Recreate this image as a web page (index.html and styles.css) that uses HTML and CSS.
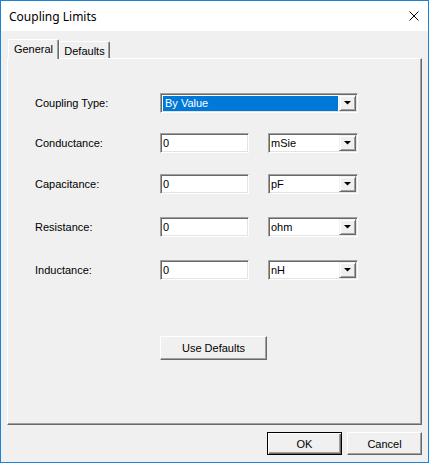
FILE: index.html
```html
<!DOCTYPE html>
<html>
<head>
<meta charset="utf-8">
<title>Coupling Limits</title>
<link rel="stylesheet" href="styles.css">
</head>
<body>
<div class="window">
  <div class="titlebar">
    <span class="title">Coupling Limits</span>
    <svg class="close" width="10" height="10" viewBox="0 0 10 10"><path d="M0.5 0.5 L9.5 9.5 M9.5 0.5 L0.5 9.5" stroke="#000" stroke-width="1" fill="none"/></svg>
  </div>
  <div class="content">
    <div class="tabs">
      <div class="tab active">General</div>
      <div class="tab">Defaults</div>
    </div>
    <div class="panel">
      <div class="form">
        <div class="label">Coupling Type:</div>
        <div class="field combo wide">
          <span class="sel">By Value</span>
          <span class="dd"><svg width="7" height="4" viewBox="0 0 7 4"><polygon points="0,0 7,0 3.5,3.6" fill="#000"/></svg></span>
        </div>

        <div class="label">Conductance:</div>
        <div class="field text">0</div>
        <div></div>
        <div class="field combo"><span class="val">mSie</span><span class="dd"><svg width="7" height="4" viewBox="0 0 7 4"><polygon points="0,0 7,0 3.5,3.6" fill="#000"/></svg></span></div>

        <div class="label">Capacitance:</div>
        <div class="field text">0</div>
        <div></div>
        <div class="field combo"><span class="val">pF</span><span class="dd"><svg width="7" height="4" viewBox="0 0 7 4"><polygon points="0,0 7,0 3.5,3.6" fill="#000"/></svg></span></div>

        <div class="label">Resistance:</div>
        <div class="field text">0</div>
        <div></div>
        <div class="field combo"><span class="val">ohm</span><span class="dd"><svg width="7" height="4" viewBox="0 0 7 4"><polygon points="0,0 7,0 3.5,3.6" fill="#000"/></svg></span></div>

        <div class="label">Inductance:</div>
        <div class="field text">0</div>
        <div></div>
        <div class="field combo"><span class="val">nH</span><span class="dd"><svg width="7" height="4" viewBox="0 0 7 4"><polygon points="0,0 7,0 3.5,3.6" fill="#000"/></svg></span></div>
      </div>
      <div class="btn defaults-btn">Use Defaults</div>
    </div>
    <div class="footer">
      <div class="btn ok">OK</div>
      <div class="btn">Cancel</div>
    </div>
  </div>
</div>
</body>
</html>
```
FILE: styles.css
```css
* { box-sizing: border-box; }
html, body { margin: 0; padding: 0; }
body {
  width: 429px;
  height: 463px;
  overflow: hidden;
  font-family: "Liberation Sans", Arial, sans-serif;
  font-size: 11px;
  color: #000;
  background: #fff;
}
.window {
  width: 429px;
  height: 463px;
  border: 1px solid #1883d7;
  display: flex;
  flex-direction: column;
  background: #f0f0f0;
}
.titlebar {
  height: 30px;
  flex: none;
  background: #fff;
  display: flex;
  align-items: center;
  padding: 0 9px 0 8px;
}
.title {
  flex: 1;
  font-family: "Noto Sans", "Segoe UI", sans-serif;
  font-size: 12px;
  margin-top: 1px;
}
.close { display: block; margin-top: -1px; }
.content {
  flex: 1;
  display: flex;
  flex-direction: column;
  padding: 8px 6px 0;
}
.tabs {
  height: 19px;
  flex: none;
  display: flex;
  align-items: flex-start;
  padding-left: 1px;
  position: relative;
  z-index: 1;
}
.tab {
  width: 51px;
  height: 17px;
  margin-top: 2px;
  border-top: 1px solid #fff;
  border-left: 1px solid #fff;
  border-right: 1px solid #696969;
  box-shadow: inset -1px 0 #a0a0a0;
  border-radius: 2px 2px 0 0;
  background: #f0f0f0;
  display: flex;
  align-items: center;
  justify-content: center;
  padding-top: 1px;
}
.tab.active {
  height: 20px;
  margin-top: 0;
  padding-top: 0;
  padding-bottom: 2px;
}
.panel {
  height: 367px;
  flex: none;
  border: 1px solid;
  border-color: #fff #696969 #696969 #fff;
  box-shadow: inset -1px -1px #a0a0a0;
  padding: 34px 0 0 27px;
}
.form {
  display: grid;
  grid-template-columns: 125px 89px 19px 90px;
  grid-template-rows: 40px 41px 43px 43px 20px;
  align-items: start;
}
.label {
  height: 20px;
  line-height: 20px;
}
.field {
  height: 20px;
  background: #fff;
  border: 1px solid;
  border-color: #a0a0a0 #fff #fff #a0a0a0;
  box-shadow: inset 1px 1px #696969, inset -1px -1px #e3e3e3;
}
.text {
  padding-left: 2px;
  line-height: 18px;
}
.combo {
  display: flex;
  align-items: center;
  padding: 1px;
}
.combo.wide { grid-column: 2 / 5; }
.val {
  flex: 1;
  padding-left: 1px;
  line-height: 16px;
}
.sel {
  flex: 1;
  height: 15px;
  margin: 0 1px 0 1px;
  background: #0078d7;
  color: #fff;
  padding-left: 2px;
  line-height: 15px;
}
.dd {
  width: 17px;
  height: 16px;
  flex: none;
  background: #f0f0f0;
  border: 1px solid;
  border-color: #f0f0f0 #696969 #696969 #f0f0f0;
  box-shadow: inset 1px 1px #fff, inset -1px -1px #a0a0a0;
  display: flex;
  align-items: center;
  justify-content: center;
}
.dd svg { display: block; }
.btn {
  width: 75px;
  height: 23px;
  background: #f0f0f0;
  border: 1px solid;
  border-color: #fff #696969 #696969 #fff;
  box-shadow: inset -1px -1px #a0a0a0;
  display: flex;
  align-items: center;
  justify-content: center;
}
.defaults-btn {
  width: 107px;
  height: 24px;
  margin: 56px 0 0 125px;
}
.btn.ok {
  border-color: #000;
  box-shadow: inset 1px 1px #fff, inset -1px -1px #696969, inset -2px -2px #a0a0a0;
}
.footer {
  display: flex;
  justify-content: flex-end;
  gap: 5px;
  padding-top: 7px;
}
```
